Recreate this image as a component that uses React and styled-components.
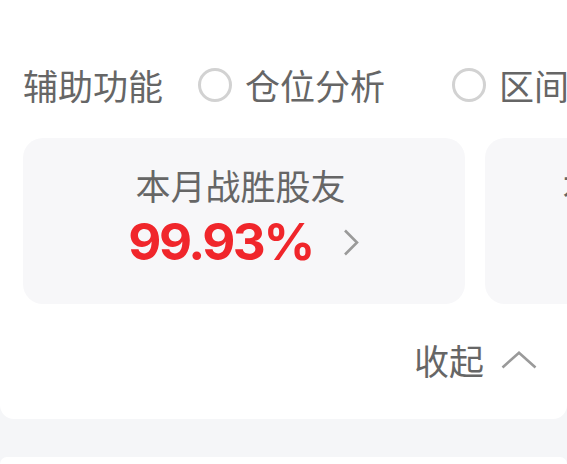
import React from 'react';
import styled, { createGlobalStyle } from 'styled-components';

const GlobalStyle = createGlobalStyle`
  html, body {
    margin: 0;
    padding: 0;
    background: #f5f6f8;
  }
  body {
    font-family: 'Noto Sans CJK SC', 'Noto Sans', sans-serif;
    color: #666666;
  }
`;

const Page = styled.div`
  width: 567px;
  height: 464px;
  overflow: hidden;
  display: flex;
  flex-direction: column;
`;

const Panel = styled.section`
  background: #ffffff;
  border-radius: 0 0 14px 14px;
  padding: 68px 0 42px;
  overflow: hidden;
`;

const OptionsRow = styled.div`
  display: flex;
  align-items: center;
  height: 34px;
  padding-left: 23px;
  white-space: nowrap;
`;

const Label = styled.span`
  font-size: 35px;
  line-height: 34px;
  margin-right: 35px;
`;

const Option = styled.label`
  display: flex;
  align-items: center;
  gap: 13px;
  margin-right: ${(p) => p.$spacing || 0}px;
  font-size: 35px;
  line-height: 34px;
  flex-shrink: 0;
`;

const Radio = styled.span`
  box-sizing: border-box;
  width: 34px;
  height: 34px;
  border-radius: 50%;
  border: 3px solid #d2d2d2;
  flex-shrink: 0;
`;

const Cards = styled.div`
  display: flex;
  gap: 20px;
  margin-top: 36px;
  padding-left: 23px;
`;

const Card = styled.div`
  flex: 0 0 442px;
  height: 166px;
  box-sizing: border-box;
  padding-top: 30px;
  border-radius: 20px;
  background: #f7f7f9;
  display: flex;
  flex-direction: column;
  align-items: center;
`;

const CardTitle = styled.div`
  font-size: 35px;
  line-height: 34px;
  white-space: nowrap;
  margin-right: 7px;
`;

const ValueRow = styled.div`
  display: flex;
  align-items: center;
  gap: 30px;
  margin-top: 13px;
  margin-right: 1px;
`;

const Value = styled.span`
  font-family: Inter, 'Liberation Sans', sans-serif;
  font-weight: 700;
  font-size: 51px;
  line-height: 54px;
  color: #f0262b;
  letter-spacing: -2.4px;
`;

const CollapseRow = styled.div`
  display: flex;
  justify-content: flex-end;
  align-items: center;
  gap: 17px;
  height: 34px;
  margin-top: 39px;
  padding-right: 30px;
`;

const CollapseText = styled.span`
  font-size: 35px;
  line-height: 34px;
`;

const Next = styled.div`
  height: 7px;
  margin-top: 38px;
  background: #ffffff;
  border-radius: 14px 14px 0 0;
`;

const ChevronRight = () => (
  <svg width="16" height="27" viewBox="0 0 16 27" fill="none">
    <path d="M2 1.5 L14 13.5 L2 25.5" stroke="#9a9a9a" strokeWidth="2.6" />
  </svg>
);

const ChevronUp = () => (
  <svg width="36" height="18" viewBox="0 0 36 18" fill="none">
    <path d="M1.5 16.5 L18 1.8 L34.5 16.5" stroke="#9a9a9a" strokeWidth="2.6" />
  </svg>
);

const stats = [
  { title: '本月战胜股友', value: '99.93%' },
  { title: '本月收益超越股友', value: '' },
];

const App = () => (
  <Page>
    <GlobalStyle />
    <Panel>
      <OptionsRow>
        <Label>辅助功能</Label>
        <Option $spacing={67}>
          <Radio />
          仓位分析
        </Option>
        <Option>
          <Radio />
          区间统计
        </Option>
      </OptionsRow>

      <Cards>
        {stats.map((s) => (
          <Card key={s.title}>
            <CardTitle>{s.title}</CardTitle>
            {s.value && (
              <ValueRow>
                <Value>{s.value}</Value>
                <ChevronRight />
              </ValueRow>
            )}
          </Card>
        ))}
      </Cards>

      <CollapseRow>
        <CollapseText>收起</CollapseText>
        <ChevronUp />
      </CollapseRow>
    </Panel>
    <Next />
  </Page>
);

export default App;
